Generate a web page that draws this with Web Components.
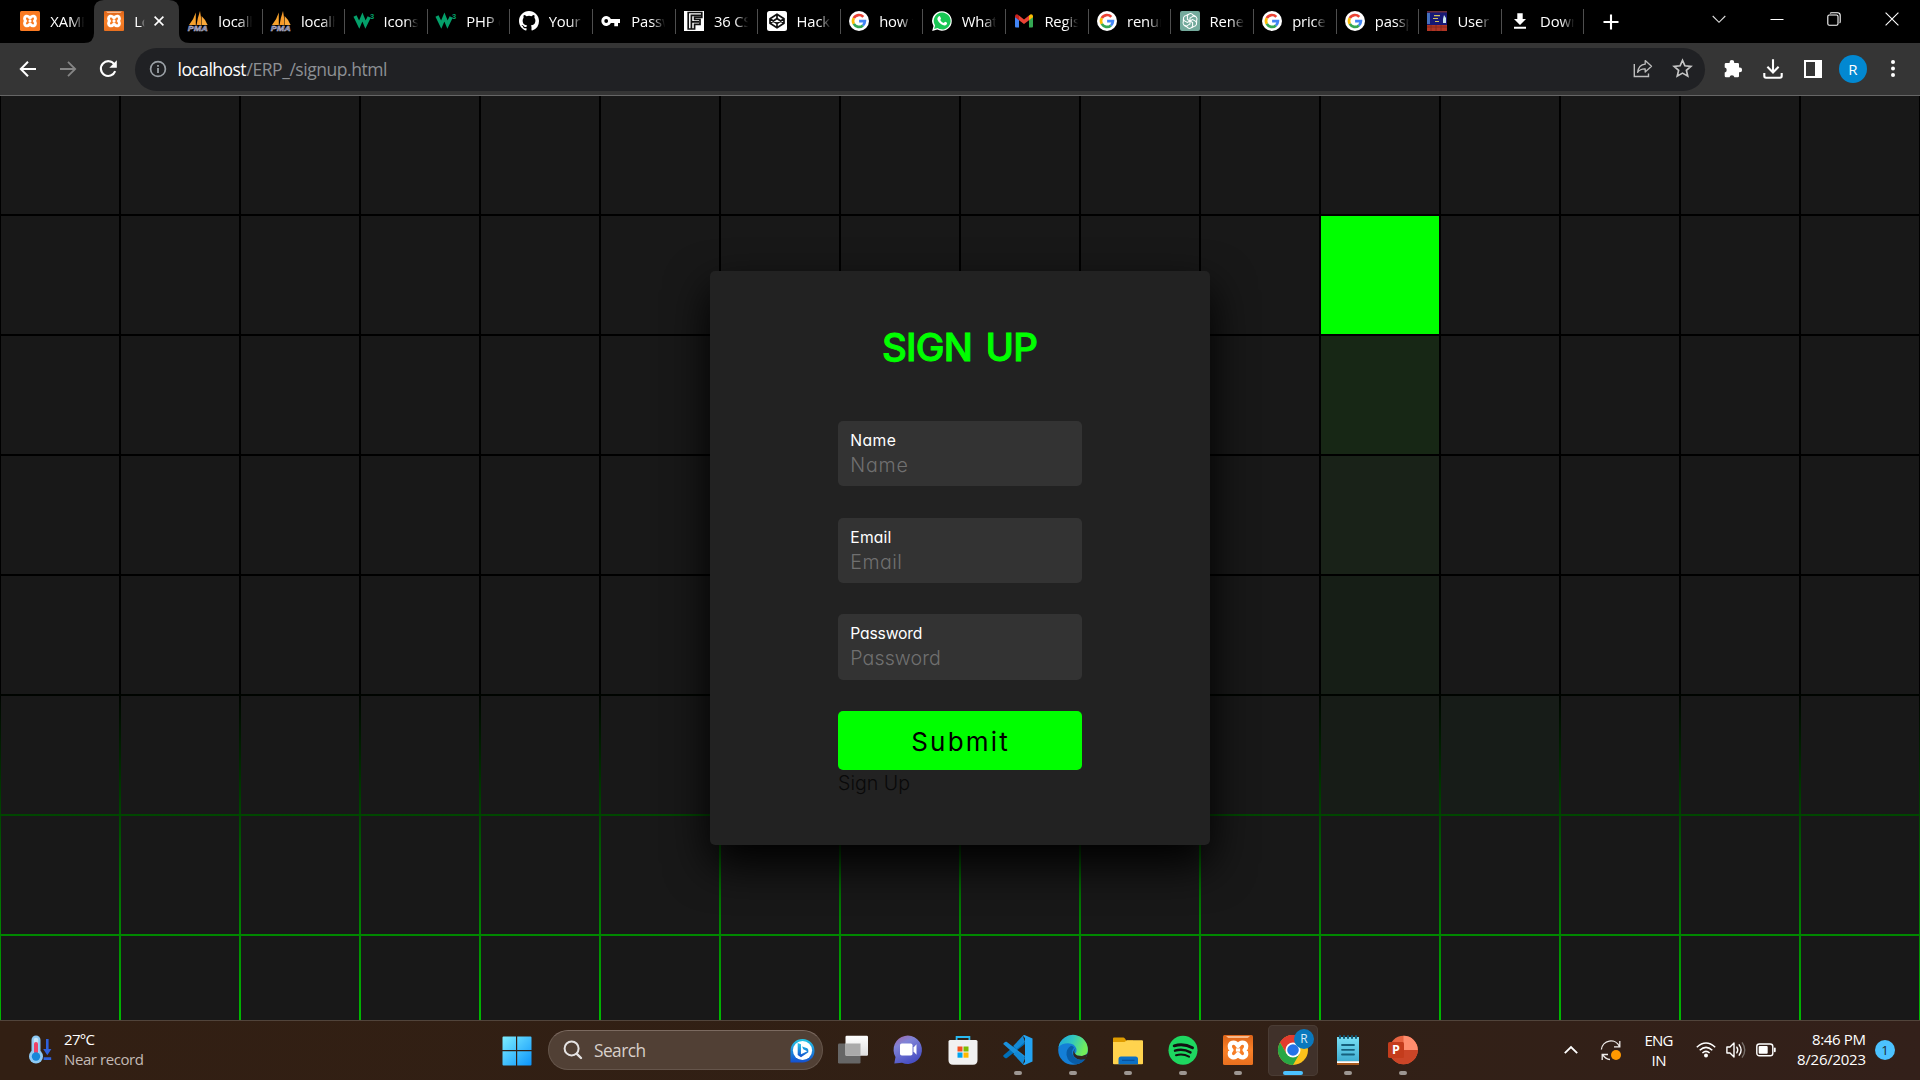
<!DOCTYPE html>
<html lang="en">
<head>
<meta charset="utf-8">
<title>Login</title>
<style>
html,body{margin:0;padding:0;width:1920px;height:1080px;overflow:hidden;background:#000}
body{font-family:"Open Sans","Noto Sans",sans-serif;color:#fff}
</style>
</head>
<body>
<desktop-screen></desktop-screen>
<script>
const google='<circle cx="10" cy="10" r="10" fill="#fff"/><g fill="none" stroke-width="2.7"><path d="M14.3 5.9A5.9 5.9 0 0 0 4.8 7.1" stroke="#ea4335"/><path d="M4.8 7.1A5.9 5.9 0 0 0 4.8 12.9" stroke="#fbbc05"/><path d="M4.8 12.9A5.9 5.9 0 0 0 13.9 14.4" stroke="#34a853"/><path d="M13.9 14.4A5.9 5.9 0 0 0 15.9 10.2H10.1" stroke="#4285f4"/></g>';
const xamppMark='<g fill="none" stroke="#fff" stroke-width="2.9" stroke-linejoin="round"><path d="M10 7.2C8.8 5.2 7.4 4.9 6.2 5.2C4 6 4.2 8.6 5.6 10C4.2 11.4 4 14 6.2 14.8C7.4 15.1 8.8 14.8 10 12.8C11.2 14.8 12.6 15.1 13.8 14.8C16 14 15.8 11.4 14.4 10C15.8 8.6 16 6 13.8 5.2C12.6 4.9 11.2 5.2 10 7.2Z"/><path d="M8.6 10H11.4" stroke-width="2.2"/></g>';
const ICONS={
xampp:[20,'<rect width="20" height="20" rx="1.5" fill="#f97a22"/>'+xamppMark],
xampp2:[20,'<defs><linearGradient id="x" x2="0" y2="1"><stop stop-color="#dc6318"/><stop offset=".5" stop-color="#fa8128"/><stop offset="1" stop-color="#e8701f"/></linearGradient></defs><rect width="20" height="20" rx="1" fill="url(#x)"/><path d="M2 .6H18L16.5 2H3.5Z" fill="#f8b98c"/>'+xamppMark],
pma:[20,'<path d="M7.8 1.5V14H1Q5.5 9 7.8 1.5Z" fill="#f7a22b"/><path d="M12 0Q9.5 7 8.6 14H13.2Q13.5 6 12 0Z" fill="#f89c2a"/><path d="M13.6 5Q18 9 19.6 14H13.6Z" fill="#fba93a"/><text x="-.3" y="19.6" font-family="Liberation Sans" font-weight="700" font-style="italic" font-size="8" textLength="20" lengthAdjust="spacingAndGlyphs" fill="#555580" stroke="#c6c6dc" stroke-width=".45">PMA</text>'],
w3:[20,'<path d="M1 5L5.2 13.6L8.4 6L11.5 13.6L15.2 6" fill="none" stroke="#04a06a" stroke-width="3.4" stroke-linejoin="miter"/><text x="16" y="8.3" font-family="Liberation Sans" font-weight="700" font-size="7.5" fill="#04a06a">3</text>'],
github:[16,'<path fill="#fff" d="M8 0C3.58 0 0 3.58 0 8c0 3.54 2.29 6.53 5.47 7.59.4.07.55-.17.55-.38 0-.19-.01-.82-.01-1.49-2.01.37-2.53-.49-2.69-.94-.09-.23-.48-.94-.82-1.13-.28-.15-.68-.52-.01-.53.63-.01 1.08.58 1.23.82.72 1.21 1.87.87 2.33.66.07-.52.28-.87.51-1.07-1.78-.2-3.64-.89-3.64-3.95 0-.87.31-1.59.82-2.15-.08-.2-.36-1.02.08-2.12 0 0 .67-.21 2.2.82a7.6 7.6 0 0 1 4 0c1.53-1.04 2.2-.82 2.2-.82.44 1.1.16 1.92.08 2.12.51.56.82 1.27.82 2.15 0 3.07-1.87 3.75-3.65 3.95.29.25.54.73.54 1.48 0 1.07-.01 1.93-.01 2.2 0 .21.15.46.55.38A8 8 0 0 0 16 8c0-4.42-3.58-8-8-8z"/>'],
key:[20,'<path fill="#fff" fill-rule="evenodd" d="M9.9 8A5 5 0 1 0 9.9 12H13.3V15.2H17V12H19V8ZM5.2 8.1A1.9 1.9 0 1 1 5.2 11.9A1.9 1.9 0 1 1 5.2 8.1Z"/>'],
ff:[20,'<path fill="#fff" d="M0 0H20V20H0Z"/><path fill="none" stroke="#111" stroke-width="1.7" d="M4.2 1.5H17.8V6.3H10.6V8.5H16V13.3H10.6V18H4.2ZM7.4 18V4.4H17M7.4 10.8H15"/>'],
codepen:[20,'<rect width="20" height="20" rx="2.5" fill="#fff"/><path fill="none" stroke="#111" stroke-width="1.7" stroke-linejoin="round" d="M10 3.2L17 7.7V12.3L10 16.8L3 12.3V7.7ZM10 3.2V7.5M10 12.5V16.8M3 7.7L10 12.5L17 7.7M3 12.3L10 7.5L17 12.3"/>'],
google:[20,google],
whatsapp:[20,'<path fill="#fff" d="M10 .2A9.8 9.8 0 1 1 5.3 18.6L.2 20L1.5 15A9.8 9.8 0 0 1 10 .2Z"/><path fill="#19c754" d="M10 1.6A8.4 8.4 0 1 1 5.6 17L2.1 17.9L3.1 14.6A8.4 8.4 0 0 1 10 1.6Z"/><path fill="#fff" d="M6.6 5.4Q7.6 4.6 8.2 5.7L9 7.6Q9 8.2 8.2 9.1Q9.5 11.4 11.7 12L12.8 10.9Q13.4 10.7 15 11.8Q15.3 12.4 14.6 13.6Q13.2 15.1 10.8 14.1Q6.8 12.5 5.4 8.6Q5 6.7 6.6 5.4Z"/>'],
gmail:[20,'<path fill="#4285f4" d="M1 5.5L5 8.5V16.6H2Q1 16.6 1 15.6Z"/><path fill="#34a853" d="M15 8.5L19 5.5V15.6Q19 16.6 18 16.6H15Z"/><path fill="#ea4335" d="M5 4.6L10 8.5L15 4.6V9.3L10 13L5 9.3Z"/><path fill="#c5221f" d="M1 5Q1.2 3 3.2 3.2L5 4.6V9.3L1 6.3Z"/><path fill="#fbbc04" d="M19 5Q18.8 3 16.8 3.2L15 4.6V9.3L19 6.3Z"/>'],
gpt:[20,'<rect width="20" height="20" rx="2" fill="#74aa9c"/><g fill="none" stroke="#fff" stroke-width="1.05"><path id="q" d="M10 10L7.4 8.5V5.2A3 3 0 0 1 12.9 4L15.3 5.5"/><use href="#q" transform="rotate(60 10 10)"/><use href="#q" transform="rotate(120 10 10)"/><use href="#q" transform="rotate(180 10 10)"/><use href="#q" transform="rotate(240 10 10)"/><use href="#q" transform="rotate(300 10 10)"/></g>'],
poster:[20,'<path fill="#171875" d="M0 0H20V20H0Z"/><path fill="#6a2d38" d="M0 0H20V1.5H0Z"/><path fill="#b03524" d="M0 14H20V20H0Z"/><path fill="#d3c05a" d="M7 4H13V5.2H7ZM6 7H11V8H6ZM8 10H12V11H8Z"/><path fill="#4470bf" d="M0 2H3V13H0Z"/><path fill="#c8e4ec" d="M17 4L19 7V12H16V8Z"/><path stroke="#7d261e" d="M0 16H20M4 14V20M9 14V20M14 14V20" stroke-width=".8"/>'],
dl:[20,'<path fill="#fff" d="M7.3 2.2H12.7V8H16L10 14L4 8H7.3ZM4 15.7H16V17.7H4Z"/>'],
plus:[16,'<path stroke="#fff" stroke-width="2.1" d="M8 .5V15.5M.5 8H15.5"/>'],
x:[10,'<path stroke="#fff" stroke-width="1.6" d="M.6 .6L9.4 9.4M9.4 .6L.6 9.4"/>'],
down:[14,'<path fill="none" stroke="#ddd" stroke-width="1.1" d="M.7 4L7 10.3L13.3 4"/>'],
min:[14,'<path stroke="#fff" stroke-width="1" d="M.5 7.5H13.5"/>'],
max:[14,'<rect x=".8" y="3" width="10.2" height="10.2" rx="1.5" fill="none" stroke="#fff" stroke-width="1.1"/><path fill="none" stroke="#fff" stroke-width="1.1" d="M3 1.3Q3.5 .8 4.5 .8H10.5Q13.2 .8 13.2 3.5V9.5Q13.2 10.6 12.6 11"/>'],
close:[14,'<path stroke="#fff" stroke-width="1.1" d="M.6 .6L13.4 13.4M13.4 .6L.6 13.4"/>'],
back:[18,'<path fill="none" stroke="#fff" stroke-width="2" d="M17 9H2M9 1.8L1.8 9L9 16.2"/>'],
fwd:[18,'<path fill="none" stroke="#858585" stroke-width="1.8" d="M1 9H16M9 1.8L16.2 9L9 16.2"/>'],
reload:[20,'<path fill="none" stroke="#fff" stroke-width="2.1" d="M16.4 5.4A7.4 7.4 0 1 0 17.2 12.2"/><path fill="#fff" d="M18.8 1.3V8.8H11.3Z"/>'],
info:[18,'<circle cx="9" cy="9" r="7.4" fill="none" stroke="#9aa0a6" stroke-width="1.7"/><path stroke="#9aa0a6" stroke-width="1.8" d="M9 8V13M9 5V6.8"/>'],
share:[20,'<path fill="none" stroke="#bdbdbd" stroke-width="1.4" d="M1.3 5V17.5H15.5V14.5"/><path fill="none" stroke="#bdbdbd" stroke-width="1.3" stroke-linejoin="round" d="M12.2 1.6L18.5 7.3L12.2 13V9.8Q7.2 9.6 4.6 13.4Q5.5 6 12.2 5.2Z"/>'],
star:[20,'<path fill="none" stroke="#c6c6c6" stroke-width="1.6" d="M10 2.2L12.3 7.4L18 8L13.7 11.8L15 17.3L10 14.4L5 17.3L6.3 11.8L2 8L7.7 7.4Z"/>'],
puzzle:[20,'<path fill="#fff" d="M1.7 5.2Q1.7 4 3 4H6.6V3.2A2.3 2.3 0 0 1 11.2 3.2V4H14.8Q16 4 16 5.2V8.6H16.8A2.3 2.3 0 0 1 16.8 13.2H16V17Q16 18.3 14.8 18.3H11.4A2.5 2.5 0 0 0 6.5 18.3H3Q1.7 18.3 1.7 17V13.5A2.5 2.5 0 0 0 1.7 8.6Z"/>'],
tray:[20,'<path fill="none" stroke="#fff" stroke-width="2.1" d="M10 .2V13M4.4 7.8L10 13.4L15.6 7.8M1.3 14V17Q1.3 18.7 3 18.7H17Q18.7 18.7 18.7 17V14"/>'],
side:[18,'<path fill="#fff" fill-rule="evenodd" d="M0 0H18V18H0ZM2 2V16H11V2Z"/>'],
dots:[20,'<circle cx="10" cy="3" r="2" fill="#fff"/><circle cx="10" cy="9.5" r="2" fill="#fff"/><circle cx="10" cy="16" r="2" fill="#fff"/>'],
thermo:[30,'<path fill="none" stroke="#8ecaf5" stroke-width="9" stroke-linecap="round" d="M9 6V23"/><circle cx="9" cy="22.5" r="7" fill="#8ecaf5"/><path stroke="#c7e5f8" stroke-width="4.5" stroke-linecap="round" d="M9 6V22"/><path stroke="#ef4268" stroke-width="4" stroke-linecap="round" d="M9 10V18"/><circle cx="9" cy="22.5" r="4.2" fill="#1687d9"/><path fill="#2f62dd" d="M19 5H21.6V15H24.4L20.3 21.3L16.2 15H19ZM16.6 23.2H24.2V26H16.6Z"/>'],
windows:[30,'<defs><linearGradient id="w" x2="1" y2="1"><stop stop-color="#7deeff"/><stop offset="1" stop-color="#0b94fb"/></linearGradient></defs><path fill="url(#w)" d="M1.5 .5H14V14H.5V1.5Q.5 .5 1.5 .5ZM15.2 .5H28.5Q29.5 .5 29.5 1.5V14H15.2ZM.5 15.2H14V29.5H1.5Q.5 29.5 .5 28.5ZM15.2 15.2H29.5V28.5Q29.5 29.5 28.5 29.5H15.2Z"/>'],
search:[20,'<circle cx="8.6" cy="8.4" r="7" fill="none" stroke="#e5e3e3" stroke-width="2"/><path stroke="#e5e3e3" stroke-width="2.4" stroke-linecap="round" d="M13.8 13.8L18 18"/>'],
bing:[26,'<defs><linearGradient id="b" x2="0" y2="1"><stop stop-color="#24c7e6"/><stop offset="1" stop-color="#144fd0"/></linearGradient></defs><path fill="url(#b)" d="M.5 25.5V13A12.5 12.2 0 1 1 13 25.5Z"/><circle cx="13" cy="13" r="10" fill="#fff"/><path fill="url(#b)" d="M8 5.2L11.4 6.5V17L18 13.8L13.8 11.8L12.6 8.8L18 10.7Q19.5 12 19.1 14.8L11.4 19.9L8 17.8Z"/>'],
taskview:[30,'<defs><linearGradient id="t" x2="0" y2="1"><stop stop-color="#fff"/><stop offset="1" stop-color="#dedede"/></linearGradient></defs><rect x="0" y="8.5" width="22.5" height="20" rx="1.2" fill="#666"/><rect x="7.5" y=".7" width="22.5" height="20" rx="1.2" fill="url(#t)"/><path fill="#aaa" d="M7.5 8.5H22.5V20.7H7.5Z"/>'],
chat:[30,'<defs><linearGradient id="c" x2=".5" y2="1"><stop stop-color="#a663a0"/><stop offset=".35" stop-color="#8083d7"/><stop offset="1" stop-color="#484fc3"/></linearGradient></defs><path fill="url(#c)" d="M1.3 28.5L2.5 22A14.2 14.2 0 1 1 9 27.8Z"/><rect x="7" y="8.5" width="12.5" height="12" rx="1.8" fill="#fff"/><path fill="#fff" d="M20.5 12.5L23.5 9.3V19.7L20.5 16.5Z"/>'],
store:[30,'<path fill="none" stroke="#29baf2" stroke-width="1.8" d="M8.6 6V2H21.4V6"/><path fill="#f1f1f1" d="M2 5H28Q29.5 5 29.5 6.5V25Q29.5 29.8 25 29.8H5Q.5 29.8 .5 25V6.5Q.5 5 2 5Z"/><path fill="#f25022" d="M9.5 11.5H14.5V16.5H9.5Z"/><path fill="#7fba00" d="M15.5 11.5H20.5V16.5H15.5Z"/><path fill="#00a4ef" d="M9.5 17.5H14.5V22.7H9.5Z"/><path fill="#ffb900" d="M15.5 17.5H20.5V22.7H15.5Z"/>'],
vscode:[30,'<path fill="#006fb7" d="M.5 20.3L20 3.5L22 9L3.6 23.2Q2.8 23.6 2 23L.6 21.8Q0 21 .5 20.3Z"/><path fill="#1a91dc" d="M.5 9.3L20 26.5L22 21L3.6 6.8Q2.8 6.4 2 7L.6 8.2Q0 9 .5 9.3Z"/><path fill="#23a3f2" d="M21.5 0L29.5 3.5V26.5L21.5 30Q20.5 30 19.8 29.2L22 27V3L19.8 .8Q20.5 0 21.5 0Z"/><path fill="#1389d5" d="M19.8 .8L10.2 11L13.8 14L22 7ZM10.2 19L19.8 29.2L22 23L13.8 16Z"/>'],
edge:[30,'<defs><linearGradient id="e" x2="1" y2=".3"><stop stop-color="#1ba5df"/><stop offset=".5" stop-color="#32c7be"/><stop offset="1" stop-color="#72ed5a"/></linearGradient></defs><circle cx="15" cy="15" r="14.8" fill="#147fd7"/><path fill="url(#e)" d="M.5 12A14.8 14.8 0 0 1 29.8 16Q29 21 23.5 21Q17 21 17 18.5Q19 17 18.5 14Q17 8.5 10 8.2Q3.5 8.2 .5 12Z"/><path fill="#095ca6" d="M13 10.8Q8 14 8.5 20Q10 28 18 29.3Q24 29 27.5 24Q19 26.5 15.4 21Q12.5 16.5 16 12.4Q15 11 13 10.8Z"/><path fill="#33251e" d="M18 13Q15 16 17 18.5Q18 21 24 21L29.5 19L27.5 24Q20 26 16.5 22Q13 17 18 13Z"/>'],
folder:[30,'<path fill="#df9c00" d="M1 2.5H10.5Q11.5 2.5 12.3 4L13.2 5.5H20V10H0V3.5Q0 2.5 1 2.5Z"/><path fill="#ffd34e" d="M11.5 7L14 5.2H29Q30 5.2 30 6.2V28.5Q30 29.3 29 29.3H1Q0 29.3 0 28.5V7Z"/><path fill="#0c70c5" d="M8 21.5H22.5Q25 21.5 25 24V29.3H5.5V24Q5.5 21.5 8 21.5Z"/><path stroke="#08509a" stroke-width="1.2" d="M9 25.3H21.5"/>'],
spotify:[30,'<circle cx="15" cy="15.3" r="14.5" fill="#1ed760"/><g fill="none" stroke="#111" stroke-linecap="round"><path stroke-width="2.9" d="M6.2 10.8Q15.6 8 24.5 12.7"/><path stroke-width="2.4" d="M7 15.7Q15 13.3 22.5 17.4"/><path stroke-width="2" d="M8 20.3Q15 18.4 21 21.7"/></g>'],
chrome:[30,'<circle cx="15" cy="15" r="15" fill="#fbc21b"/><path fill="#e23b2e" d="M2 7.5A15 15 0 0 1 28 7.5L15 8Z"/><path fill="#e23b2e" d="M2 7.5A15 15 0 0 1 28 7.5H15L8.5 18.7Z"/><path fill="#28a745" d="M2 7.5A15 15 0 0 0 15 30L21.5 18.8H8.5Z"/><circle cx="15" cy="15" r="7.5" fill="#fff"/><circle cx="15" cy="15" r="5.8" fill="#2473e8"/>'],
notepad:[30,'<defs><linearGradient id="n" x2="0" y2="1"><stop stop-color="#78dff5"/><stop offset="1" stop-color="#3fadd1"/></linearGradient></defs><path fill="url(#n)" d="M4 2H26V26.5H4Z"/><path fill="#fff" d="M4 26.2H26V28H4Z"/><path fill="#a8591d" d="M4 28H26V30H4Z"/><path stroke="#16607d" stroke-width="1.8" stroke-linecap="round" d="M9 10H21M9 14.8H21M9 19.5H21"/><path stroke="#135875" stroke-width="2.1" stroke-linecap="round" d="M7 1V3M11 1V3M15 1V3M19 1V3M23 1V3"/>'],
ppt:[30,'<circle cx="15.5" cy="15" r="14.3" fill="#e76340"/><path fill="#ff8d6e" d="M15.5 .7A14.3 14.3 0 0 1 29.8 15H15.5Z"/><path fill="#cb4527" d="M1.2 15H29.8A14.3 14.3 0 0 1 1.2 15Z"/><rect x="0" y="7" width="16" height="16" rx="1.5" fill="#c43c1c"/><text x="4" y="19.3" font-family="Open Sans" font-weight="700" font-size="12.5" fill="#fff">P</text>'],
up:[14,'<path fill="none" stroke="#fff" stroke-width="1.8" d="M.8 10.2L7 4L13.2 10.2"/>'],
sync:[24,'<path fill="none" stroke="#f0ecea" stroke-width="1.3" d="M2.4 11.5A9.5 9.5 0 0 1 20.5 8.5M20.8 3V8.8H15M11 21.5Q6.5 21.2 3.5 16.7M3.2 22V16.5H9"/><circle cx="17" cy="17" r="5" fill="#ff9800"/>'],
wifi:[20,'<g fill="none" stroke="#fff" stroke-width="1.5"><path d="M.8 7.2Q10 -1.2 19.2 7.2M3.7 10.2Q10 4.5 16.3 10.2M6.4 13Q10 9.7 13.6 13"/></g><circle cx="10" cy="15.5" r="2" fill="#fff"/>'],
vol:[20,'<path fill="none" stroke="#fff" stroke-width="1.4" stroke-linejoin="round" d="M.9 7H4L8 3V17L4 13H.9Z"/><path fill="none" stroke="#fff" stroke-width="1.4" stroke-linecap="round" d="M10.8 7.2Q12.7 10 10.8 12.8M13.2 4.8Q17 10 13.2 15.2"/><path fill="none" stroke="#78706b" stroke-width="1.4" d="M16 2.3Q21.5 10 16 17.7"/>'],
battery:[20,'<rect x=".8" y="4" width="16" height="11.8" rx="2.6" fill="none" stroke="#fff" stroke-width="1.4"/><rect x="2.7" y="6" width="9" height="7.8" rx="1" fill="#fff"/><path stroke="#fff" stroke-width="1.8" stroke-linecap="round" d="M18.8 8.5V11.3"/>']
};
const define=(name,css,html,after)=>customElements.define(name,class extends HTMLElement{
  connectedCallback(){
    if(this.shadowRoot)return;
    const r=this.attachShadow({mode:'open'});
    r.innerHTML='<style>*{box-sizing:border-box}'+css+'</style>'+(typeof html==='function'?html(this):html);
    if(after)after(this,r);
  }
});
const at=(e,n,d='')=>e.getAttribute(n)||d;

define('ui-icon',':host{display:block;flex:none}svg{display:block;overflow:visible}',e=>{
  const [box,body]=ICONS[at(e,'name')],s=at(e,'size',box);
  return `<svg width="${s}" height="${s}" viewBox="0 0 ${box} ${box}">${body}</svg>`;
});

// Single-line text tracked to a fixed advance width.
define('fit-text',':host{display:block;white-space:pre;flex:none}span{display:inline-block}','<span><slot></slot></span>',(e,r)=>{
  const s=r.querySelector('span'),w=+at(e,'w',0),n=e.textContent.length;
  if(w&&n>1){const d=(w-s.getBoundingClientRect().width)/(n-1);s.style.letterSpacing=d+'px';s.style.marginRight=-d+'px';}
});

define('browser-tab',`
:host{display:flex;align-items:center;width:82.62px;height:43px;padding:0 0 1px 9.3px;flex:none;font-size:14.8px;position:relative}
.t{margin-left:10px;width:35px;overflow:hidden;white-space:nowrap;line-height:20px;letter-spacing:-.15px;-webkit-mask:linear-gradient(90deg,#000 60%,transparent 98%);mask:linear-gradient(90deg,#000 60%,transparent 98%)}
:host([sep])::after{content:"";position:absolute;right:-1px;top:9px;width:1px;height:25px;background:#4e4e4e}
:host([first]){width:84px}
:host([active]){width:84px}
:host([active]) .t{width:11px}
.bg{position:absolute;left:-11px;top:0;z-index:-1}
ui-icon.c{margin-left:9px}`,
e=>`${e.hasAttribute('active')?'<svg class="bg" width="107" height="43"><path fill="#353535" d="M0 43Q10 43 10 33V10Q10 0 20 0H85Q95 0 95 10V33Q95 43 106 43Z"/></svg>':''}<ui-icon name="${at(e,'icon')}" size="20"></ui-icon><div class="t"><slot></slot></div>${e.hasAttribute('active')?'<ui-icon class="c" name="x" size="10"></ui-icon>':''}`);

const tabs=[['xampp','XAMP'],['xampp2','Lo'],['pma','localh'],['pma','localh'],['w3','Icons'],['w3','PHP c'],['github','Your'],['key','Passw'],['ff','36 CS'],['codepen','Hack'],['google','how t'],['whatsapp','What'],['gmail','Regis'],['google','renun'],['gpt','Rene'],['google','price'],['google','passp'],['poster','User'],['dl','Down']];
define('tab-strip',`
:host{display:flex;height:43px;background:#000;padding-left:11px;align-items:center;position:relative;z-index:0}
.plus{margin-left:20px}.win{margin-left:auto;display:flex;gap:43.5px;padding:0 21.5px 6px 0}`,
tabs.map((t,i)=>`<browser-tab icon="${t[0]}" ${i==0?'first':''} ${i==1?'active':''} ${i>1?'sep':''}>${t[1]}</browser-tab>`).join('')+
'<ui-icon class="plus" name="plus" size="16"></ui-icon><div class="win"><ui-icon name="down"></ui-icon><ui-icon name="min"></ui-icon><ui-icon name="max"></ui-icon><ui-icon name="close"></ui-icon></div>');

define('address-bar',`
:host{display:flex;align-items:center;width:1570px;height:43px;border-radius:22px;background:#202124;padding:0 12px 1px 13.5px;font-size:17.5px;line-height:24px}
.i{margin-right:11px}.p{color:#8d9094}.s{margin-left:auto;margin-right:19px}`,
'<ui-icon class="i" name="info" size="18"></ui-icon><fit-text w="69">localhost</fit-text><fit-text class="p" w="141">/ERP_/signup.html</fit-text><ui-icon class="s" name="share" size="20"></ui-icon><ui-icon name="star" size="21"></ui-icon>');

define('browser-toolbar',`
:host{display:flex;align-items:center;height:53px;background:#353535;border-bottom:1px solid #666;padding:0 17px 0 18.5px}
.n{display:flex;align-items:center;gap:22px;width:116.5px}.n :nth-child(3){margin-left:-1px}
.r{display:flex;align-items:center;margin-left:17.5px;gap:20px}
.a{width:28px;height:28px;border-radius:50%;background:#0288d1;text-align:center;font:15px/28px "Open Sans",sans-serif;margin:0 -4px 0 -2.5px}`,
'<div class="n"><ui-icon name="back" size="18"></ui-icon><ui-icon name="fwd" size="18"></ui-icon><ui-icon name="reload" size="20"></ui-icon></div><address-bar></address-bar><div class="r"><ui-icon name="puzzle" size="20"></ui-icon><ui-icon name="tray" size="20"></ui-icon><ui-icon name="side" size="18" style="margin-left:1px"></ui-icon><div class="a">R</div><ui-icon name="dots" size="20"></ui-icon></div>');

define('cell-grid',`
:host{display:grid;grid-template-columns:repeat(16,118px);grid-auto-rows:118px;gap:2px;padding:0 1px;height:924px;overflow:hidden;background:linear-gradient(#000 592px,#0f0 1054px)}
i{background:#181818}`,()=>{
  const lit={27:'#0f0',43:'#172715',59:'#192218',75:'#161e16',91:'#171c17',92:'#171c18'};
  return Array.from({length:128},(_,i)=>`<i${lit[i]?` style="background:${lit[i]}"`:''}></i>`).join('');
});

define('form-field',`
:host{display:block;height:65.4px;border-radius:5px;background:#333;padding:10px 12.3px 0}
.l{font-size:15.7px;line-height:20px}.p{font-size:19.6px;line-height:29.5px;color:#707070;font-weight:350}`,
e=>`<fit-text class="l" w="${at(e,'lw')}">${at(e,'label')}</fit-text><fit-text class="p" w="${at(e,'pw')}">${at(e,'label')}</fit-text>`);

define('signup-card',`
:host{display:flex;flex-direction:column;align-items:center;width:500px;height:574px;border-radius:5px;background:#222;padding-top:51px;box-shadow:0 18.75px 43.75px #000;font-family:Inter,sans-serif;font-feature-settings:"cv11","ss03"}
.h{color:#0f0;font-size:38.5px;font-weight:500;line-height:50px;word-spacing:4px;-webkit-text-stroke:.9px #0f0;stroke-linejoin:round}
form{display:flex;flex-direction:column;gap:31.3px;width:244px;margin-top:49px}
.b{display:flex;align-items:center;justify-content:center;height:59px;background:#0f0;border-radius:5px;color:#000;font-size:26px;line-height:30px;padding:2px 1px 0 0}
.k{color:#090909;font-size:19.6px;line-height:26px;font-weight:300}`,
'<fit-text class="h" w="156">SIGN UP</fit-text><form><form-field label="Name" lw="45.5" pw="57.5"></form-field><form-field label="Email" lw="41" pw="51.5"></form-field><form-field label="Password" lw="72" pw="90.5"></form-field><div><div class="b"><fit-text w="96.5">Submit</fit-text></div><fit-text class="k" w="72">Sign Up</fit-text></div></form>');

define('web-page',':host{display:grid;height:924px;overflow:hidden}cell-grid,signup-card{grid-area:1/1}signup-card{place-self:center;z-index:1}','<cell-grid></cell-grid><signup-card></signup-card>');

define('task-item',`
:host{display:flex;flex-direction:column;align-items:center;justify-content:flex-start;width:50px;height:51px;padding-top:10px;flex:none;position:relative;border-radius:5px}
:host([on]){background:#40312a;box-shadow:inset 0 0 0 1px #4a3c34}
.d{width:8px;height:4px;border-radius:2px;background:#9d9692;margin-top:6px}:host([on]) .d{width:20px;background:#4cc2ff}
.r{position:absolute;left:26px;top:4px;width:20px;height:20px;border-radius:50%;background:#0a78bd;text-align:center;font:12px/20px "Open Sans",sans-serif;color:#d9ecf8}`,
e=>`<ui-icon name="${at(e,'icon')}" size="30"></ui-icon>${e.hasAttribute('run')?'<div class="d"></div>':''}${e.hasAttribute('on')?'<div class="r">R</div>':''}`);

define('task-bar',`
:host{display:flex;height:60px;border-top:1px solid #51443b;background:linear-gradient(90deg,#321f13,#312015 60%,#33201a);font-size:15px;line-height:20px;align-items:flex-start;padding-top:4px}
.w{display:flex;width:502px;padding:9px 0 0 26.5px}.w div{margin:-5px 0 0 7.5px}.dim{color:#c3bab5}
.win{padding-top:10.5px;width:46px;margin-left:-.5px;margin-right:.5px}
.s{display:flex;align-items:center;width:275px;height:40px;margin-top:5px;border-radius:20px;background:#514035;border:1px solid #65554b;border-top-color:#7b6a60;padding:0 7px 0 14px;font-size:17.3px;color:#d8d0cb}
.s fit-text{margin:1px auto 0 11px}
.a{display:flex;gap:5.05px;margin-left:4.5px}
.t{display:flex;margin-left:auto;align-items:center;height:50px;padding-right:25px}
.e{display:flex;flex-direction:column;align-items:flex-end;width:72px;margin:-2px 0 0 18px}
.l{display:flex;flex-direction:column;align-items:center;width:34px;margin:-1px 20px 0 19px}
.n{width:20px;height:20px;border-radius:50%;background:#4cc2ff;color:#1b2a35;font-size:13px;text-align:center;margin-left:9px}`,
`<div class="w"><ui-icon name="thermo" size="30"></ui-icon><div><fit-text w="31">27°C</fit-text><fit-text class="dim" w="80">Near record</fit-text></div></div>
<div class="win"><ui-icon name="windows" size="30"></ui-icon></div>
<div class="s"><ui-icon name="search" size="20"></ui-icon><fit-text w="52">Search</fit-text><ui-icon name="bing" size="25"></ui-icon></div>
<div class="a">`+[['taskview'],['chat'],['store'],['vscode','run'],['edge','run'],['folder','run'],['spotify','run'],['xampp2','run'],['chrome','run on'],['notepad','run'],['ppt','run']].map(a=>`<task-item icon="${a[0]}" ${a[1]||''}></task-item>`).join('')+
`</div><div class="t"><ui-icon name="up" size="14"></ui-icon><ui-icon name="sync" size="24" style="margin-left:21px"></ui-icon><div class="l"><fit-text w="29">ENG</fit-text><fit-text w="15">IN</fit-text></div><ui-icon name="wifi" size="20"></ui-icon><ui-icon name="vol" size="20" style="margin-left:10px"></ui-icon><ui-icon name="battery" size="20" style="margin-left:10px"></ui-icon><div class="e"><fit-text w="54">8:46 PM</fit-text><fit-text w="69">8/26/2023</fit-text></div><div class="n">1</div></div>`);

define('desktop-screen',':host{display:flex;flex-direction:column;width:1920px;height:1080px}','<tab-strip></tab-strip><browser-toolbar></browser-toolbar><web-page></web-page><task-bar></task-bar>');
</script>
</body>
</html>
